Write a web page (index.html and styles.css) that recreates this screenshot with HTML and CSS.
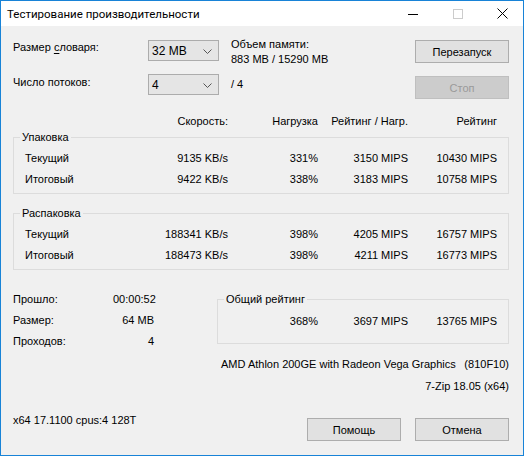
FILE: index.html
```html
<!DOCTYPE html>
<html lang="ru">
<head>
    <meta charset="UTF-8">
    <title>Тестирование производительности</title>
    <link rel="stylesheet" href="styles.css">
</head>
<body>

    <div class="window">
        <!-- Title bar -->
        <div class="titlebar">
            <span class="title">Тестирование производительности</span>
            <div class="caption">
                <span class="cap-btn">
                    <svg width="10" height="10" viewBox="0 0 10 10"><path d="M0 5.5H10" stroke="#000" stroke-width="1"/></svg>
                </span>
                <span class="cap-btn">
                    <svg width="10" height="10" viewBox="0 0 10 10"><rect x="0.5" y="0.5" width="9" height="9" fill="none" stroke="#cccccc" stroke-width="1"/></svg>
                </span>
                <span class="cap-btn">
                    <svg width="11" height="11" viewBox="0 0 11 11"><path d="M0.5 0.5L10.5 10.5M10.5 0.5L0.5 10.5" stroke="#000" stroke-width="1"/></svg>
                </span>
            </div>
        </div>

        <div class="content">
            <!-- Dictionary / threads -->
            <div class="settings">
                <label class="set-label">Размер <u>с</u>ловаря:</label>
                <div class="combo">
                    <span>32 MB</span>
                    <svg width="9" height="5" viewBox="0 0 9 5"><path d="M0.5 0.5L4.5 4.5L8.5 0.5" fill="none" stroke="#555" stroke-width="1"/></svg>
                </div>
                <div class="memory">Объем памяти:<br>883 MB / 15290 MB</div>
                <button class="btn">Перезапуск</button>

                <label class="set-label second">Число потоков:</label>
                <div class="combo">
                    <span>4</span>
                    <svg width="9" height="5" viewBox="0 0 9 5"><path d="M0.5 0.5L4.5 4.5L8.5 0.5" fill="none" stroke="#555" stroke-width="1"/></svg>
                </div>
                <div class="threads">/ 4</div>
                <button class="btn stop" disabled>Стоп</button>
            </div>

            <!-- Column headers -->
            <div class="stats-head">
                <span></span>
                <span>Скорость:</span>
                <span>Нагрузка</span>
                <span>Рейтинг / Нагр.</span>
                <span>Рейтинг</span>
            </div>

            <fieldset class="group pack">
                <legend>Упаковка</legend>
                <div class="stats-row">
                    <span class="name">Текущий</span>
                    <span>9135 KB/s</span>
                    <span>331%</span>
                    <span>3150 MIPS</span>
                    <span>10430 MIPS</span>
                </div>
                <div class="stats-row">
                    <span class="name">Итоговый</span>
                    <span>9422 KB/s</span>
                    <span>338%</span>
                    <span>3183 MIPS</span>
                    <span>10758 MIPS</span>
                </div>
            </fieldset>

            <fieldset class="group unpack">
                <legend>Распаковка</legend>
                <div class="stats-row">
                    <span class="name">Текущий</span>
                    <span>188341 KB/s</span>
                    <span>398%</span>
                    <span>4205 MIPS</span>
                    <span>16757 MIPS</span>
                </div>
                <div class="stats-row">
                    <span class="name">Итоговый</span>
                    <span>188473 KB/s</span>
                    <span>398%</span>
                    <span>4211 MIPS</span>
                    <span>16773 MIPS</span>
                </div>
            </fieldset>

            <!-- Totals -->
            <div class="summary">
                <div class="info-list">
                    <span>Прошло:</span><span class="val">00:00:52</span>
                    <span>Размер:</span><span class="val">64 MB</span>
                    <span>Проходов:</span><span class="val">4</span>
                </div>
                <div class="summary-right">
                    <fieldset class="group total">
                        <legend>Общий рейтинг</legend>
                        <div class="total-row">
                            <span></span>
                            <span>368%</span>
                            <span>3697 MIPS</span>
                            <span>13765 MIPS</span>
                        </div>
                    </fieldset>
                    <div class="cpu">
                        <span>AMD Athlon 200GE with Radeon Vega Graphics</span>
                        <span>(810F10)</span>
                    </div>
                    <div class="version">7-Zip 18.05 (x64)</div>
                </div>
            </div>

            <!-- Footer -->
            <div class="footer">
                <span class="sysinfo">x64 17.1100 cpus:4 128T</span>
                <div class="footer-buttons">
                    <button class="btn">Помощь</button>
                    <button class="btn">Отмена</button>
                </div>
            </div>
        </div>
    </div>

</body>
</html>
```

FILE: styles.css
```css
/* General */
body {
    margin: 0;
    font-family: 'Liberation Sans', Arial, sans-serif;
    font-size: 11px;
    color: #000;
}

.window {
    width: 524px;
    height: 456px;
    box-sizing: border-box;
    border: 1px solid #1883d7;
    background: #f0f0f0;
    display: flex;
    flex-direction: column;
}

/* Title bar */
.titlebar {
    height: 25px;
    background: #fff;
    display: flex;
    align-items: center;
    justify-content: space-between;
}

.title {
    font-family: Roboto, sans-serif;
    font-size: 11.5px;
    padding-left: 6px;
}

.caption {
    display: flex;
    height: 100%;
    margin-right: -2px;
}

.cap-btn {
    width: 45px;
    display: flex;
    align-items: center;
    justify-content: center;
}

.content {
    flex: 1;
    display: flex;
    flex-direction: column;
    padding: 14px 14px 14px 12px;
    line-height: 15px;
}

/* Settings block */
.settings {
    display: grid;
    grid-template-columns: 135px 71px 1fr 94px;
    grid-template-rows: 34px auto;
    align-items: start;
}

.set-label.second {
    margin-top: 1px;
}

.set-label u {
    text-decoration-thickness: 1px;
    text-underline-offset: 2px;
}

.combo {
    height: 21px;
    box-sizing: border-box;
    border: 1px solid #acacac;
    background: #e5e5e5;
    display: flex;
    align-items: center;
    justify-content: space-between;
    padding: 2px 6px 0 3px;
    font-size: 12px;
}

.combo svg {
    margin-top: -1px;
}

.memory {
    margin-top: -3px;
    padding-left: 12px;
}

.threads {
    margin-top: 3px;
    padding-left: 12px;
}

.btn {
    height: 23px;
    box-sizing: border-box;
    border: 1px solid #adadad;
    background: #e1e1e1;
    font-family: inherit;
    font-size: 11px;
    color: #000;
    padding: 0;
}

.btn.stop {
    margin-top: 2px;
    background: #cccccc;
    border-color: #bfbfbf;
    color: #9a9a9a;
}

/* Stats tables */
.stats-head,
.stats-row {
    display: grid;
    grid-template-columns: 135px 80px 90px 90px 89px;
    text-align: right;
}

.stats-head {
    margin-top: 15px;
}

.stats-row {
    grid-template-columns: 134px 80px 90px 90px 89px;
    line-height: 21px;
}

.stats-row .name {
    text-align: left;
    padding-left: 11px;
}

.group {
    margin: 0;
    padding: 3px 0;
    border: 1px solid #dcdcdc;
    min-width: 0;
}

.group legend {
    padding: 0 2px;
    margin-left: 6px;
    line-height: 15px;
}

.group.pack {
    margin-top: 1px;
}

.group.unpack {
    margin-top: 12px;
}

/* Summary */
.summary {
    display: grid;
    grid-template-columns: 204px 1fr;
    margin-top: 19px;
}

.info-list {
    display: grid;
    grid-template-columns: 100px 41px;
    grid-auto-rows: 21px;
    line-height: 21px;
}

.info-list .val {
    text-align: right;
    white-space: nowrap;
}

.summary-right {
    padding-top: 3px;
}

.group.total {
    padding: 4px 0 11px;
}

.total-row {
    display: grid;
    grid-template-columns: 10px 90px 90px 89px;
    text-align: right;
    line-height: 21px;
}

.cpu {
    display: flex;
    justify-content: space-between;
    padding-left: 4px;
    margin-top: 13px;
}

.version {
    text-align: right;
    margin-top: 7px;
}

/* Footer */
.footer {
    margin-top: auto;
    display: flex;
    justify-content: space-between;
    align-items: flex-start;
}

.sysinfo {
    margin-top: -5px;
}

.footer-buttons {
    display: flex;
    gap: 14px;
}

.footer-buttons .btn {
    width: 94px;
}
```
